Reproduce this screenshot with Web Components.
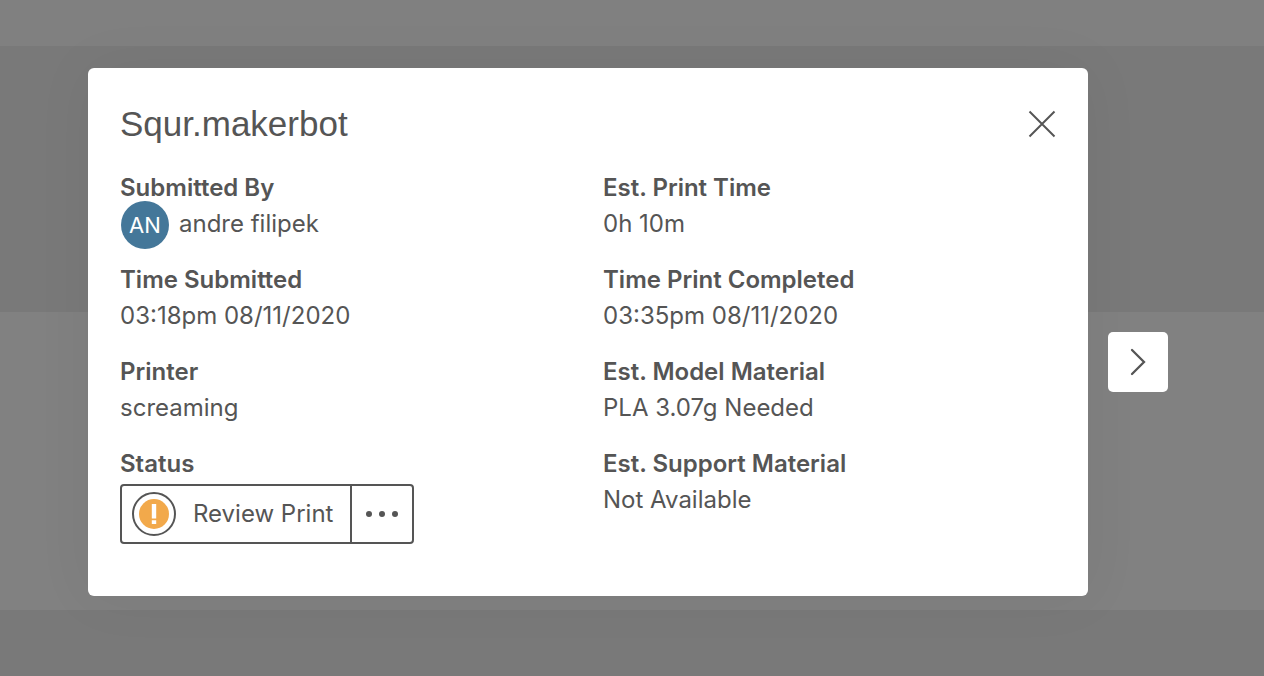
<!DOCTYPE html>
<html lang="en">
<head>
<meta charset="utf-8">
<title>Squr.makerbot</title>
<meta name="viewport" content="width=device-width, initial-scale=1">
<style>
html, body { height: 100%; margin: 0; }
body { font-family: Inter, "Liberation Sans", sans-serif; color: #555; background: #787878; }
</style>
</head>
<body>
<job-overlay>
  <job-dialog heading="Squr.makerbot">
    <job-field label="Submitted By"><user-chip initials="AN">andre filipek</user-chip></job-field>
    <job-field label="Est. Print Time">0h 10m</job-field>
    <job-field label="Time Submitted">03:18pm 08/11/2020</job-field>
    <job-field label="Time Print Completed">03:35pm 08/11/2020</job-field>
    <job-field label="Printer">screaming</job-field>
    <job-field label="Est. Model Material">PLA 3.07g Needed</job-field>
    <job-field label="Status"><status-action>Review Print</status-action></job-field>
    <job-field label="Est. Support Material">Not Available</job-field>
  </job-dialog>
  <next-button slot="next"></next-button>
</job-overlay>
<script>
const define = (name, render) => customElements.define(name, class extends HTMLElement {
  connectedCallback() {
    if (!this.shadowRoot) this.attachShadow({ mode: "open" }).innerHTML = render(this);
  }
});

define("job-overlay", () => `
<style>
  :host {
    display: flex; align-items: flex-start; gap: 20px; box-sizing: border-box;
    min-height: 100%; padding: 68px 96px 80px 88px;
    background: linear-gradient(#808080 46px, #797979 46px 312px, #818181 312px 610px, #797979 610px);
  }
  .next { align-self: center; padding-top: 60px; }
</style>
<slot></slot><div class="next"><slot name="next"></slot></div>`);

define("job-dialog", el => `
<style>
  :host { display: block; flex: 1; min-width: 0; }
  section {
    box-sizing: border-box; padding: 32px 32px 52px; background: #fff;
    border-radius: 6px; box-shadow: 0 0 60px rgba(0, 0, 0, .05);
  }
  header { display: flex; align-items: center; justify-content: space-between; margin-bottom: 22px; }
  h1 { margin: 0; font: 35px/48px "Liberation Sans", Arial, sans-serif; }
  button { display: flex; padding: 0; border: 0; background: none; color: inherit; cursor: pointer; }
  .fields { display: grid; grid-template-columns: 1fr 1fr; gap: 20px 30px; }
</style>
<section role="dialog" aria-labelledby="heading">
  <header>
    <h1 id="heading">${el.getAttribute("heading")}</h1>
    <button type="button" aria-label="Close">
      <svg width="28" height="28" viewBox="0 0 28 28" fill="none" stroke="currentColor" stroke-width="2"><path d="M1.5 1.5l25 25M26.5 1.5l-25 25"/></svg>
    </button>
  </header>
  <div class="fields"><slot></slot></div>
</section>`);

define("job-field", el => `
<style>
  :host { display: block; font-size: 24px; line-height: 36px; }
  h2 { margin: 0; font-size: inherit; font-weight: 600; }
</style>
<h2>${el.getAttribute("label")}</h2>
<div><slot></slot></div>`);

define("user-chip", el => `
<style>
  :host { display: flex; align-items: center; gap: 10px; height: 36px; }
  .avatar {
    flex: none; width: 48px; height: 48px; margin: 2px 0 0 1px; border-radius: 50%;
    background: #447799; color: #fff; font-size: 22px; line-height: 48px; text-align: center;
  }
</style>
<span class="avatar">${el.getAttribute("initials")}</span><span><slot></slot></span>`);

define("status-action", () => `
<style>
  :host { display: flex; margin-top: 2px; }
  .group { display: flex; border: 2px solid #555; border-radius: 4px; }
  button {
    display: flex; align-items: center; height: 56px; margin: 0; border: 0;
    background: none; font: inherit; color: inherit; cursor: pointer;
  }
  .main { gap: 17px; padding: 0 17px 0 10px; }
  .more { width: 62px; padding: 0; justify-content: center; border-left: 2px solid #555; }
</style>
<div class="group" role="group">
  <button class="main" type="button">
    <svg width="44" height="44" viewBox="0 0 44 44" aria-hidden="true">
      <circle cx="22" cy="22" r="21" fill="#fff" stroke="#555" stroke-width="2"/>
      <circle cx="22" cy="22" r="15" fill="#f2a94b"/>
      <path d="M19.8 12h4.4v14.6h-4.4zM19.8 28.2h4.4v3.8h-4.4z" fill="#fff"/>
    </svg>
    <span><slot></slot></span>
  </button>
  <button class="more" type="button" aria-label="More actions">
    <svg width="32" height="6" viewBox="0 0 32 6" fill="currentColor"><circle cx="3" cy="3" r="3"/><circle cx="16" cy="3" r="3"/><circle cx="29" cy="3" r="3"/></svg>
  </button>
</div>`);

define("next-button", () => `
<style>
  :host { display: block; }
  button {
    display: flex; align-items: center; justify-content: center; width: 60px; height: 60px;
    padding: 0; border: 0; border-radius: 5px; background: #fff; color: #555; cursor: pointer;
  }
</style>
<button type="button" aria-label="Next">
  <svg width="16" height="28" viewBox="0 0 16 28" fill="none" stroke="currentColor" stroke-width="2.3" stroke-linecap="round"><path d="M2 2l12 12L2 26"/></svg>
</button>`);
</script>
</body>
</html>
